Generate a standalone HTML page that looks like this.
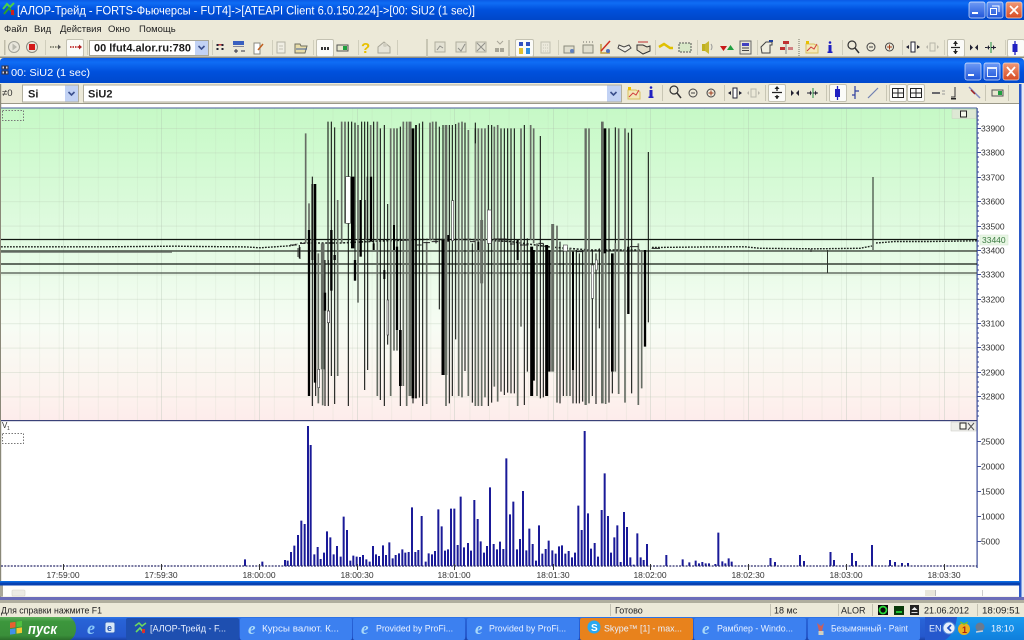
<!DOCTYPE html>
<html><head><meta charset="utf-8"><title>АЛОР-Трейд</title>
<style>html,body{margin:0;padding:0;background:#ece9d8;width:1024px;height:640px;overflow:hidden}svg{display:block;filter:blur(.3px)}text{font-family:"Liberation Sans",sans-serif}</style></head>
<body>
<svg width="1024" height="640" viewBox="0 0 1024 640" xmlns="http://www.w3.org/2000/svg">
<defs>
<linearGradient id="tb" x1="0" y1="0" x2="0" y2="1"><stop offset="0" stop-color="#0a5ae6"/><stop offset=".15" stop-color="#0f6df5"/><stop offset=".5" stop-color="#0050dc"/><stop offset="1" stop-color="#0046c8"/></linearGradient>
<linearGradient id="chartg" x1="0" y1="108" x2="0" y2="420" gradientUnits="userSpaceOnUse"><stop offset="0" stop-color="#c6f9c6"/><stop offset=".45" stop-color="#e4fbe4"/><stop offset=".7" stop-color="#f7fcf4"/><stop offset=".92" stop-color="#fdf2ee"/><stop offset="1" stop-color="#fdeceb"/></linearGradient>
<linearGradient id="task" x1="0" y1="0" x2="0" y2="1"><stop offset="0" stop-color="#2f78ea"/><stop offset=".12" stop-color="#2863d6"/><stop offset=".85" stop-color="#2558cd"/><stop offset="1" stop-color="#1b43a8"/></linearGradient>
<linearGradient id="start" x1="0" y1="0" x2="0" y2="1"><stop offset="0" stop-color="#5cae5c"/><stop offset=".2" stop-color="#3c963c"/><stop offset=".8" stop-color="#3a8f3a"/><stop offset="1" stop-color="#2b6f2b"/></linearGradient>
<linearGradient id="tray" x1="0" y1="0" x2="0" y2="1"><stop offset="0" stop-color="#1a9af0"/><stop offset="1" stop-color="#0f7fdc"/></linearGradient>
<linearGradient id="btn" x1="0" y1="0" x2="0" y2="1"><stop offset="0" stop-color="#6f9bf5"/><stop offset="1" stop-color="#1f55d8"/></linearGradient>
<linearGradient id="red" x1="0" y1="0" x2="0" y2="1"><stop offset="0" stop-color="#f09a78"/><stop offset="1" stop-color="#d84a22"/></linearGradient>
<pattern id="grid" x="0" y="128" width="19.56" height="24.4" patternUnits="userSpaceOnUse"><path d="M0 .5H19.56" stroke="#b8c8b0" stroke-opacity=".3" stroke-width="1" fill="none"/><path d="M.5 0V24.4" stroke="#b8c8b0" stroke-opacity=".16" stroke-width="1" fill="none"/></pattern>
</defs>

<rect width="1024" height="640" fill="#ece9d8"/>

<!-- main title -->
<rect width="1024" height="20" fill="url(#tb)"/>
<g><path d="M3 9 L7 4 L10 7 L14 3" stroke="#4ad04a" stroke-width="2" fill="none"/><path d="M4 14 L9 8 L14 15" stroke="#2ca02c" stroke-width="2" fill="none"/><rect x="11" y="10" width="3" height="5" fill="#d02020"/></g>
<text x="17" y="14.500" font-size="11.500" fill="#fff" textLength="458" lengthAdjust="spacingAndGlyphs">[АЛОР-Трейд - FORTS-Фьючерсы - FUT4]-&gt;[ATEAPI Client 6.0.150.224]-&gt;[00: SiU2 (1 sec)]</text>
<rect x="969" y="2" width="16" height="16" rx="2" fill="url(#btn)" stroke="#dfe9fb" stroke-width=".7"/><rect x="972" y="12" width="6" height="2" fill="#fff"/>
<rect x="987" y="2" width="16" height="16" rx="2" fill="url(#btn)" stroke="#dfe9fb" stroke-width=".7"/><path d="M992 6h7v6M990.500 8.500h6v6h-6z" stroke="#fff" fill="none"/>
<rect x="1006" y="2" width="16" height="16" rx="2" fill="url(#red)" stroke="#f3dcd0" stroke-width=".7"/><path d="M1010 6l8 8M1018 6l-8 8" stroke="#fff" stroke-width="1.700"/>

<!-- menu -->
<g font-size="9.500" fill="#222"><text x="4" y="32">Файл</text><text x="34" y="32">Вид</text><text x="60" y="32">Действия</text><text x="108" y="32">Окно</text><text x="139" y="32">Помощь</text></g>

<!-- main toolbar -->
<rect x="0" y="56.500" width="1024" height="1.500" fill="#8e8d80"/>
<rect x="4" y="40" width="1.500" height="15" fill="#c0bdaa"/>
<g fill="#d0cebc"><rect x="45" y="40" width="1" height="15"/><rect x="87" y="40" width="1" height="15"/><rect x="212" y="40" width="1" height="15"/><rect x="272" y="40" width="1" height="15"/><rect x="313" y="40" width="1" height="15"/><rect x="358" y="40" width="1" height="15"/><rect x="397" y="40" width="1" height="15"/><rect x="558" y="40" width="1" height="15"/><rect x="655" y="40" width="1" height="15"/><rect x="697" y="40" width="1" height="15"/><rect x="757" y="40" width="1" height="15"/><rect x="842" y="40" width="1" height="15"/><rect x="902" y="40" width="1" height="15"/><rect x="944" y="40" width="1" height="15"/><rect x="1005" y="40" width="1" height="15"/></g>
<!-- pressed -->
<g fill="#fbfbf8" stroke="#c4c2b2"><rect x="66.500" y="39.500" width="17" height="17" rx="1.500"/><rect x="316.500" y="39.500" width="17" height="17" rx="1.500"/><rect x="515.500" y="39.500" width="18" height="17" rx="1.500"/><rect x="947.500" y="39.500" width="17" height="17" rx="1.500"/><rect x="1007.500" y="39.500" width="17" height="17" rx="1.500"/></g>
<!-- combo main -->
<rect x="89.500" y="40.500" width="119" height="15" fill="#fff" stroke="#a8a697"/>
<text x="94" y="51.500" font-size="11" font-weight="bold" fill="#1a1a1a" textLength="97" lengthAdjust="spacingAndGlyphs">00 lfut4.alor.ru:780</text>
<rect x="195" y="41" width="13" height="14" fill="#c2d2f4"/><path d="M198.500 46l3 3 3-3" stroke="#3a4f8c" stroke-width="1.600" fill="none"/>
<!-- icons left -->
<circle cx="14" cy="47" r="5.500" fill="#e8e6dc" stroke="#a0a096"/><path d="M12.500 43.500l4.500 3.500-4.500 3.500z" fill="#b8b8ae"/>
<circle cx="32" cy="47" r="5.500" fill="#e8e4da" stroke="#8a8a80"/><rect x="29" y="44" width="6" height="6" fill="#d41818"/>
<path d="M50 47h9" stroke="#8a8a78" stroke-width="2" stroke-dasharray="1.500 1"/><path d="M58 44.500l3 2.500-3 2.500z" fill="#555"/>
<path d="M70 47h9" stroke="#c84848" stroke-width="2" stroke-dasharray="1.500 1"/><path d="M79 44.500l3 2.500-3 2.500z" fill="#b02020"/>
<g fill="#223"><rect x="216.500" y="44" width="2" height="2"/><rect x="216.500" y="48" width="2" height="2"/><rect x="221.500" y="44" width="2" height="2"/><rect x="221.500" y="48" width="2" height="2"/></g><rect x="218.500" y="44" width="3" height="1.500" fill="#d04040"/>
<rect x="233" y="41" width="11" height="4" fill="#3a60c0" /><path d="M234 51h4M236 49v4M241 51h4" stroke="#334" /><rect x="233" y="46" width="11" height="1" fill="#889"/>
<path d="M254 43h6v11h-6z" fill="#fff" stroke="#8a8a80"/><path d="M258 50l5-6" stroke="#c06020" stroke-width="1.500"/>
<rect x="277" y="42" width="8" height="11" fill="#f0eee4" stroke="#b4b2a4"/><path d="M279 46h4M279 49h4" stroke="#c4c2b4"/>
<path d="M295 44h5l1 2h6l-2 7h-10z" fill="#e8dca8" stroke="#707060"/><path d="M296 49h11" stroke="#4060a0"/>
<g fill="#333"><rect x="321" y="47" width="2" height="3"/><rect x="324" y="47" width="2" height="3"/><rect x="327" y="47" width="2" height="3"/></g>
<rect x="337" y="45" width="11" height="6" fill="#e8e8d0" stroke="#555"/><rect x="343" y="46" width="4" height="4" fill="#20a040"/>
<text x="361" y="53" font-size="15" font-weight="bold" fill="#e8c000">?</text>
<path d="M378 47l6-5 6 5v6h-12z" fill="#e6e4d8" stroke="#a8a698"/><circle cx="385" cy="45" r="2" fill="#d0cec0"/>
<rect x="426" y="39" width="2" height="18" fill="#c8c6b4"/>
<g stroke="#b0ae9e" fill="#e4e2d4"><rect x="435" y="42" width="10" height="10"/><rect x="456" y="42" width="10" height="10"/><rect x="476" y="42" width="10" height="10"/></g>
<path d="M437 50l3-4 3 2M458 48l3 3 4-7M477 43l8 8M485 43l-8 8" stroke="#90908a" fill="none"/>
<rect x="495" y="48" width="4" height="4" fill="#a8a698"/><rect x="500" y="48" width="4" height="4" fill="#a8a698"/><path d="M497 41l3 3 3-3" stroke="#a8a698" fill="none"/>
<rect x="508" y="40" width="2" height="17" fill="#c8c6b4"/>
<!-- icons right -->
<g><rect x="519" y="42" width="4" height="4" fill="#3050c0"/><rect x="526" y="42" width="4" height="4" fill="#3050c0"/><rect x="519" y="48" width="4" height="6" fill="#e0c030"/><rect x="526" y="48" width="4" height="6" fill="#3090e0"/></g>
<rect x="541" y="42" width="9" height="11" fill="#ece9dc" stroke="#c0beb0"/><path d="M543 45h5M543 48h5M543 51h5" stroke="#c8c6b8" stroke-dasharray="1 1"/>
<g fill="#e0dece" stroke="#8a8a7c"><path d="M564 46h10v7h-10z"/><path d="M583 45h10v8h-10z"/></g><circle cx="572" cy="51" r="2" fill="#6080c0"/><path d="M583 42h1M586 42h1M589 42h1M592 42h1" stroke="#707068" />
<path d="M601 44v9h9" stroke="#c0a040" stroke-width="1.500" fill="none"/><path d="M601 51l9-10" stroke="#d03020" stroke-width="1.500"/><circle cx="608" cy="51" r="2" fill="#5070c0"/>
<path d="M619 45l5 2 5-2 2 3-6 4-7-4z" fill="#f0eee4" stroke="#444"/>
<path d="M637 45h6l4 2 3-1v5l-7 3-6-4z" fill="#e4dcc8" stroke="#333"/><path d="M638 42h10" stroke="#c03030"/>
<path d="M659 47l5-3 6 4h3" stroke="#e0c000" stroke-width="2.500" fill="none"/>
<rect x="679" y="43" width="12" height="9" fill="#d8e8c8" stroke="#555" stroke-dasharray="2 1"/>
<rect x="702" y="44" width="4" height="7" fill="#c0b020"/><path d="M705 44l4-3v13l-4-3z" fill="#c8b830"/><path d="M711 44q2 3 0 6" stroke="#999" fill="none"/>
<path d="M720 46h7l-3.500 5z" fill="#c81818"/><path d="M727 50h7l-3.500-5z" fill="#20a040"/>
<rect x="740" y="41" width="11" height="13" fill="#e8e6d8" stroke="#666"/><rect x="742" y="43" width="7" height="3" fill="#4040c0"/><path d="M742 48h7M742 50.500h7" stroke="#444"/>
<path d="M761 47l5-5 6 0v3l-2 0v8h-8z" fill="#f0eee0" stroke="#444"/><path d="M769 41h4" stroke="#2040a0" stroke-width="2"/>
<rect x="783" y="41" width="6" height="3" fill="#c03030"/><rect x="780" y="47" width="5" height="3" fill="#c03030"/><rect x="788" y="47" width="5" height="3" fill="#d08080"/><path d="M786 44v10" stroke="#888"/>
<path d="M799 39v18" stroke="#b0ae9e" stroke-width="2" stroke-dasharray="1 1"/>
<path d="M806 44v9h12v-7l-4-2z" fill="#f4e8b8" stroke="#d8c060"/><path d="M807 51l4-4 3 2 3-5" stroke="#d04040" fill="none"/><rect x="806" y="41" width="3" height="3" fill="#e8c000"/>
<circle cx="830" cy="42.500" r="1.300" fill="#2020c0"/><rect x="828.500" y="45" width="3" height="7" fill="#2020c0"/><rect x="827.500" y="51.500" width="5" height="1.500" fill="#2020c0"/>
<circle cx="852" cy="45" r="4" fill="none" stroke="#333" stroke-width="1.200"/><path d="M855 48l4 5" stroke="#333" stroke-width="1.500"/>
<circle cx="871" cy="47" r="4" fill="none" stroke="#444"/><path d="M869 47h4" stroke="#444"/>
<circle cx="889.500" cy="47" r="4" fill="none" stroke="#444"/><path d="M887 47h5M889.500 44.500v5" stroke="#a04020"/>
<rect x="911" y="42" width="4" height="10" fill="#fff" stroke="#223"/><path d="M909 45l-3 2 3 2zM917 45l3 2-3 2z" fill="#223"/>
<rect x="930" y="43" width="5" height="8" fill="none" stroke="#b8b6aa"/><path d="M928 45l-2 2 2 2zM937 45l2 2-2 2z" fill="#b8b6aa"/>
<path d="M955.500 41v5M955.500 49v5M951 47.500h9" stroke="#222" stroke-width="1.300"/><path d="M953 44l2.500-3 2.500 3zM953 51l2.500 3 2.500-3z" fill="#222"/>
<path d="M970 44.500v6l3-3zM978 44.500v6l-3-3z" fill="#223"/>
<path d="M991 42v11" stroke="#209040"/><path d="M985 47.500h12" stroke="#223" stroke-dasharray="2 1"/><path d="M989 45v5l-2-2.500zM993 45v5l2-2.500z" fill="#223"/>
<rect x="1012.500" y="44" width="5" height="8" fill="#2020c0"/><path d="M1015 41v14" stroke="#2020c0" stroke-width="1.300"/>

<!-- inner window -->
<path d="M0 62q0-4 4-4h1016q4 0 4 4v24H0z" fill="url(#tb)"/>
<rect x="0" y="83" width="1024" height="21" fill="#ece9d8"/>
<rect x="0" y="103" width="1020" height="1" fill="#9a9888"/>
<rect x="1" y="104" width="1019" height="478" fill="#fff"/>
<g fill="#d8d8e8" stroke="#334"><rect x="2" y="66" width="2.500" height="3"/><rect x="5.500" y="66" width="2.500" height="3"/><rect x="2" y="71" width="2.500" height="3"/><rect x="5.500" y="71" width="2.500" height="3"/></g>
<text x="11" y="76" font-size="10.500" fill="#fff" textLength="79" lengthAdjust="spacingAndGlyphs">00: SiU2 (1 sec)</text>
<rect x="965" y="63" width="16" height="17" rx="2" fill="url(#btn)" stroke="#dfe9fb" stroke-width=".7"/><rect x="968" y="74" width="6" height="2" fill="#fff"/>
<rect x="984" y="63" width="16" height="17" rx="2" fill="url(#btn)" stroke="#dfe9fb" stroke-width=".7"/><path d="M987.500 67.500h9v9h-9zM987.500 68.500h9" stroke="#e8f0ff" fill="none"/>
<rect x="1003" y="63" width="16" height="17" rx="2" fill="url(#red)" stroke="#f3dcd0" stroke-width=".7"/><path d="M1007 67l8 9M1015 67l-8 9" stroke="#fff" stroke-width="1.800"/>

<!-- inner toolbar -->
<text x="2" y="96" font-size="9.500" fill="#333">≠0</text>
<rect x="22.500" y="85" width="56" height="17" fill="#fff" stroke="#b0ae9e"/>
<text x="28" y="97.500" font-size="11" font-weight="bold" fill="#222">Si</text>
<rect x="65" y="85.500" width="13" height="16" fill="#c2d2f4"/><path d="M68.500 92l3 3 3-3" stroke="#3a4f8c" stroke-width="1.600" fill="none"/>
<rect x="83.500" y="85" width="538" height="17" fill="#fff" stroke="#b0ae9e"/>
<text x="88" y="97.500" font-size="11" font-weight="bold" fill="#222">SiU2</text>
<rect x="607" y="85.500" width="14" height="16" fill="#c2d2f4"/><path d="M610.500 92l3 3 3-3" stroke="#3a4f8c" stroke-width="1.600" fill="none"/>
<g fill="#fbfbf8" stroke="#c4c2b2"><rect x="768.500" y="84.500" width="17" height="17" rx="1.500"/><rect x="829.500" y="84.500" width="17" height="17" rx="1.500"/><rect x="889.500" y="84.500" width="17" height="17" rx="1.500"/><rect x="907.500" y="84.500" width="17" height="17" rx="1.500"/></g>
<rect x="662" y="85" width="1" height="16" fill="#c8c6b4"/><rect x="724" y="85" width="1" height="16" fill="#c8c6b4"/><rect x="765" y="85" width="1" height="16" fill="#c8c6b4"/><rect x="826" y="85" width="1" height="16" fill="#c8c6b4"/><rect x="886" y="85" width="1" height="16" fill="#c8c6b4"/><rect x="985" y="85" width="1" height="16" fill="#c8c6b4"/><rect x="1008" y="85" width="1" height="16" fill="#c8c6b4"/>
<path d="M628 90v9h12v-7l-4-2z" fill="#f4e8b8" stroke="#d8c060"/><path d="M629 97l4-4 3 2 3-5" stroke="#d04040" fill="none"/><rect x="628" y="87" width="3" height="3" fill="#e8c000"/>
<circle cx="651" cy="87.500" r="1.300" fill="#2020c0"/><rect x="649.500" y="90" width="3" height="7" fill="#2020c0"/><rect x="648.500" y="96.500" width="5" height="1.500" fill="#2020c0"/>
<circle cx="674" cy="90" r="4" fill="none" stroke="#333" stroke-width="1.200"/><path d="M677 93l4 5" stroke="#333" stroke-width="1.500"/>
<circle cx="693" cy="93" r="4" fill="none" stroke="#444"/><path d="M691 93h4" stroke="#444"/>
<circle cx="711" cy="93" r="4" fill="none" stroke="#444"/><path d="M708.500 93h5M711 90.500v5" stroke="#a04020"/>
<rect x="733" y="88" width="4" height="10" fill="#fff" stroke="#223"/><path d="M731 91l-3 2 3 2zM739 91l3 2-3 2z" fill="#223"/>
<rect x="751" y="89" width="5" height="8" fill="none" stroke="#b8b6aa"/><path d="M749 91l-2 2 2 2zM758 91l2 2-2 2z" fill="#b8b6aa"/>
<path d="M777 87v4M777 95v4M772 92.500h10" stroke="#222" stroke-width="1.300"/><path d="M774.500 89l2.500-3 2.500 3zM774.500 96l2.500 3 2.500-3z" fill="#222"/>
<path d="M791 90v6l3-3zM799 90v6l-3-3z" fill="#223"/>
<path d="M813 88v10" stroke="#209040"/><path d="M807 93h12" stroke="#223" stroke-dasharray="2 1"/><path d="M811 90.500v5l-2-2.500zM815 90.500v5l2-2.500z" fill="#223"/>
<rect x="835" y="89" width="5" height="8" fill="#2020c0"/><path d="M837.500 86v14" stroke="#2020c0" stroke-width="1.300"/>
<path d="M855 86v13M855 91h4M855 95h-3" stroke="#3040a0" stroke-width="1.200" fill="none"/>
<path d="M868 98l10-10" stroke="#7080b0" stroke-width="1.200"/>
<path d="M892.500 88.500h11v9h-11zM892.500 93h11M898 88.500v9" stroke="#222" fill="none"/><path d="M910.500 88.500h11v9h-11zM910.500 93h11M916 88.500v9" stroke="#222" fill="none"/>
<path d="M932 93h8" stroke="#223" stroke-width="1.300"/><path d="M942 91h3M942 94h3" stroke="#999"/>
<path d="M955 87v10h-4" stroke="#333" fill="none"/><rect x="951" y="98" width="5" height="1.500" fill="#222"/>
<path d="M969 87l11 11" stroke="#8088c0" stroke-width="1.500"/><path d="M971 90l4 4" stroke="#a02020" stroke-width="1.500"/>
<rect x="992" y="90" width="11" height="6" fill="#e8e8d0" stroke="#555"/><rect x="998" y="91" width="4" height="4" fill="#20a040"/>

<!-- inner edges -->
<rect x="0" y="84" width="1.200" height="514" fill="#8a8878"/>
<rect x="1019" y="84" width="2.500" height="514" fill="#2a58c8"/>
<rect x="1021.500" y="84" width="2.500" height="519" fill="#e4eaf8"/>

<!-- price chart -->
<rect x="1" y="108" width="976" height="312" fill="url(#chartg)"/>
<rect x="1" y="108" width="976" height="312" fill="url(#grid)"/>
<g stroke="#aab8a8" stroke-opacity=".3"><path d="M63.500 109V420M161.500 109V420M259.500 109V420M357.500 109V420M454.500 109V420M553.500 109V420M650.500 109V420M748.500 109V420M846.500 109V420M944.500 109V420"/></g>
<rect x="1" y="107.500" width="976" height="1" fill="#4a5a98"/>
<rect x="976.500" y="108" width="1.200" height="460" fill="#3a4a98"/>
<rect x="1" y="420" width="976" height="1.200" fill="#3a4178"/>
<rect x="2.500" y="110.500" width="21" height="10" fill="none" stroke="#777" stroke-dasharray="1.500 1.500"/>
<rect x="952" y="109.500" width="24" height="9" fill="#dde8d4" stroke="#c8d0c0" stroke-width=".5"/><rect x="960.500" y="111" width="6" height="6" fill="#f4f8ec" stroke="#222"/>

<!-- level lines -->
<g fill="none">
<path d="M1 239.500H977" stroke="#111811" stroke-width="1.200"/>
<path d="M1 251H977" stroke="#2c342c" stroke-width="1.300"/>
<path d="M1 252.300H172" stroke="#6a706a" stroke-width="1"/>
<path d="M1 264H977" stroke="#111811" stroke-width="1.200"/>
<path d="M1 273H977" stroke="#4a524a" stroke-width="1.300"/>
</g>

<!-- tick dashes -->
<g fill="none" stroke="#1f241f">
<path d="M1 246.800H105L140 246.500 175 246.200 200 246.500 246 246.900 260 247.800 290 245.800 298 244" stroke-width="1.400" stroke-dasharray="1.800 1.200"/>
<path d="M652 247.500L700 247 745 246.800 760 248.300 780 248.500 815 248.800 860 248.300 872 246" stroke-width="1.400" stroke-dasharray="1.800 1.200"/>
<path d="M876 243L895 241.500H930L978 240.800" stroke-width="1.400" stroke-dasharray="1.800 1.200"/>
<path d="M300 243L340 243 380 241 420 239.500 470 239.500 510 241.500 550 247 590 250 610 250 640 250" stroke-width="1.600" stroke-dasharray="2 1.600"/>
</g>
<path d="M873 177V250" stroke="#2e362e" stroke-width="1.100"/>
<path d="M827.500 250V273" stroke="#2e362e" stroke-width="1"/>
<path d="M298 248v9M300 247v12" stroke="#333"/>
<path d="M811 249v3" stroke="#333"/>

<!-- candles group 1 -->
<g transform="translate(290,110) scale(.33333)" fill="none" stroke-linecap="butt">
<g stroke="#666d64" stroke-width="5">
<path d="M47 70V400M57 280V360M85 430V880M143 270V798M155 35V400M165 35V340M204 45V578M232 200V390M242 45V200M262 35V858M302 55V858M312 55V722M321 410V722M340 35V828M350 35V888M410 395V882M420 38V390M428 35V390M506 38V858M516 35V862M535 60V858"/>
<path d="M360 35V858" stroke-width="9"/><path d="M98 400V778" stroke-width="11"/><path d="M98 778V886" stroke-width="5"/><path d="M67 222V450" stroke-width="7"/><path d="M468 45V795" stroke-width="8"/><path d="M468 795V888" stroke-width="5"/><path d="M225 270V390" stroke-width="6"/>
</g>
<g stroke="#101310" stroke-width="3.200">
<path d="M28 405V445M67 200V888M77 222V858M105 450V888M115 450V888M114 35V460M124 35V798M134 52V882M175 35V888M185 35V200M195 38V512M215 35V270M224 35V840M233 35V780M251 35V420M271 55V870M283 45V888M293 282V704M321 55V410M331 50V888M388 40V863M398 35V888M438 35V400M448 50V598M459 45V390M478 45V880M487 45V858M497 42V688M525 38V783M369 865V880"/>
</g>
<g stroke="#000">
<path d="M57 360V858" stroke-width="7"/><path d="M75 222V818" stroke-width="7"/><path d="M105 548V602" stroke-width="7"/><path d="M124 360V542" stroke-width="7"/><path d="M134 435V450" stroke-width="7"/><path d="M188 200V415" stroke-width="10"/><path d="M195 450V512" stroke-width="7"/><path d="M212 270V440" stroke-width="7"/><path d="M243 200V395" stroke-width="7"/><path d="M251 400V420" stroke-width="6"/><path d="M283 480V507" stroke-width="6"/><path d="M312 345V420" stroke-width="6"/><path d="M321 410V660" stroke-width="7"/><path d="M331 660V828" stroke-width="8"/><path d="M369 55V865" stroke-width="8"/><path d="M378 45V865" stroke-width="5"/><path d="M459 390V795" stroke-width="9"/><path d="M475 375V395" stroke-width="6"/>
</g>
<g fill="#fff" stroke="#444" stroke-width="2"><rect x="167" y="200" width="14" height="140"/><rect x="112" y="603" width="7" height="35"/><rect x="83" y="778" width="6" height="55"/><rect x="291" y="570" width="5" height="105"/><rect x="485" y="272" width="6" height="120"/></g>
<g stroke="#222" stroke-width="3"><path d="M0 405H20M30 400H45M340 390H355M375 405H395M400 398H420M425 395H445"/></g>
</g>

<!-- candles group 2 -->
<g transform="translate(470,110) scale(.33333)" fill="none">
<g stroke="#666d64" stroke-width="5">
<path d="M16 55V888M25 55V888M45 55V862M73 50V830M83 45V875M143 390V888M182 45V390M191 55V400M201 400V858M261 347V878M290 415V858M300 415V858M357 55V880M407 430V882M436 400V785M446 55V852M465 55V878M505 400V885M515 420V835"/>
<path d="M35 55V888" stroke-width="5"/><path d="M35 330V520" stroke-width="9"/><path d="M248 342V785" stroke-width="9"/><path d="M347 55V885" stroke-width="7"/><path d="M397 35V880" stroke-width="8"/><path d="M153 55V650" stroke-width="5"/>
</g>
<g stroke="#101310" stroke-width="3.200">
<path d="M7 400V878M16 38V100M55 45V888M65 45V878M93 55V845M103 55V855M113 55V848M123 55V850M133 55V850M163 45V885M172 385V785M211 78V865M220 400V862M270 395V880M280 415V858M309 780V880M319 420V880M328 430V880M338 420V875M367 420V858M378 430V882M388 415V655M417 55V878M427 785V850M436 52V400M475 68V410M485 55V850M535 126V637"/>
</g>
<g stroke="#000">
<path d="M25 395V420" stroke-width="6"/><path d="M143 390V450M143 430V448" stroke-width="6"/><path d="M185 410V858" stroke-width="9"/><path d="M191 420V812" stroke-width="7"/><path d="M230 405V858" stroke-width="9"/><path d="M238 420V785" stroke-width="7"/><path d="M309 425V780" stroke-width="6"/><path d="M405 55V430" stroke-width="8"/><path d="M427 430V785" stroke-width="8"/><path d="M475 410V612" stroke-width="7"/><path d="M525 420V710" stroke-width="7"/>
</g>
<g fill="#fff" stroke="#555" stroke-width="2"><rect x="52" y="300" width="12" height="100"/><rect x="364" y="465" width="7" height="100"/><rect x="376" y="450" width="6" height="30"/><rect x="280" y="405" width="12" height="18"/></g>
<g stroke="#222" stroke-width="3"><path d="M0 395H15M70 387H110M120 402H135M150 405H175M205 400H220M320 425H340M480 410H505M545 415H570"/></g>
</g>

<!-- price axis -->
<g stroke="#3a4a98"><path d="M977 128.500h4M977 152.500h4M977 177.500h4M977 201.500h4M977 226.500h4M977 250.500h4M977 274.500h4M977 299.500h4M977 323.500h4M977 347.500h4M977 372.500h4M977 396.500h4"/><path d="M977 112h2M977 116h2M977 120h2M977 124h2M977 133h2M977 138h2M977 143h2M977 148h2M977 157h2M977 162h2M977 167h2M977 172h2M977 182h2M977 187h2M977 192h2M977 197h2M977 206h2M977 211h2M977 216h2M977 221h2M977 231h2M977 236h2M977 241h2M977 246h2M977 255h2M977 260h2M977 265h2M977 270h2M977 279h2M977 284h2M977 289h2M977 294h2M977 304h2M977 309h2M977 314h2M977 319h2M977 328h2M977 333h2M977 338h2M977 343h2M977 352h2M977 357h2M977 362h2M977 367h2M977 377h2M977 382h2M977 387h2M977 392h2M977 401h2M977 406h2M977 411h2M977 416h2"/></g>
<g font-size="8.500" fill="#333"><text x="981" y="131.500">33900</text><text x="981" y="155.500">33800</text><text x="981" y="180.500">33700</text><text x="981" y="204.500">33600</text><text x="981" y="229.500">33500</text><text x="981" y="253.500">33400</text><text x="981" y="277.500">33300</text><text x="981" y="302.500">33200</text><text x="981" y="326.500">33100</text><text x="981" y="350.500">33000</text><text x="981" y="375.500">32900</text><text x="981" y="399.500">32800</text></g>
<rect x="980" y="235" width="28" height="10" fill="#e8f6e4" stroke="#d4e4d0" stroke-width=".5"/>
<text x="982" y="243" font-size="8.500" fill="#3c7a42">33440</text>

<!-- volume panel -->
<text x="2" y="428" font-size="8" fill="#333">V</text><text x="7" y="430" font-size="5" fill="#333">1</text>
<rect x="2.500" y="433.500" width="21" height="10" fill="none" stroke="#777" stroke-dasharray="1.500 1.500"/>
<rect x="951" y="422" width="25" height="9" fill="#eeeeea" stroke="#c8c8c0" stroke-width=".5"/><rect x="960" y="423" width="6" height="6" fill="#f8f8f0" stroke="#222"/><path d="M968 423l6 7M974 423l-6 7" stroke="#555"/>

<g transform="translate(230,420) scale(.33333)" stroke="#1a1a98" stroke-width="6" fill="none">
<path d="M45 418V438M97 425V438M165 420V438M173 422V438M183 396V438M193 377V438M204 345V438M214 302V438M224 312V438M234 18V438M242 75V438M253 403V438M263 381V438M272 417V438M282 398V438M291 334V438M301 352V438M311 403V438M321 378V438M332 410V438M341 290V438M351 330V438M361 422V438M370 407V438M380 410V438M390 411V438M399 405V438M409 418V438M419 425V438M429 378V438M438 403V438M447 408V438M459 376V438M468 405V438M478 367V438M488 415V438M497 405V438M507 400V438M517 388V438M526 398V438M536 396V438M546 262V438M556 396V438M565 390V438M575 288V438M587 425V438M596 400V438M606 403V438M615 393V438M625 268V438M635 319V438M645 392V438M654 388V438M663 266V438M673 266V438M683 375V438M692 230V438M702 382V438M714 369V438M723 392V438M733 240V438M743 297V438M752 364V438M762 398V438M771 378V438"/>
</g>
<g transform="translate(490,420) scale(.33333)" stroke="#1a1a98" stroke-width="6" fill="none">
<path d="M0 202V438M11 372V438M21 388V438M30 365V438M40 387V438M49 115V438M60 283V438M70 245V438M81 388V438M90 357V438M99 213V438M109 391V438M118 326V438M128 372V438M138 422V438M147 316V438M157 401V438M167 387V438M176 362V438M187 391V438M197 401V438M207 379V438M216 376V438M226 401V438M236 393V438M246 412V438M255 398V438M265 257V438M275 330V438M284 33V438M294 280V438M303 386V438M314 369V438M324 410V438M335 270V438M344 160V438M354 288V438M363 398V438M373 352V438M382 316V438M392 426V438M402 276V438M411 321V438M421 412V438M431 434V438M442 340V438M452 412V438M461 420V438M471 372V438M529 405V438M578 418V438M598 427V438M617 422V438M627 430V438M637 426V438M647 430V438M657 430V438M676 432V438M685 338V438M697 424V438M706 430V438M716 415V438M725 425V438"/>
</g>
<path d="M770.500 566V558M775 566V562M800 566V555M804 566V561M830.500 566V552M834 566V560M852 566V553M856 566V561M872 566V545M890 566V560M895 566V562M902 566V563M908 566V563" stroke="#1a1a98" stroke-width="2" fill="none"/>
<path d="M1 566H977" stroke="#2a2a6a" stroke-width="1.200" stroke-dasharray="2 1.260"/>
<!-- volume axis -->
<g stroke="#3a4a98"><path d="M977 441.500h4M977 466.500h4M977 491.500h4M977 516.500h4M977 541.500h4"/></g>
<g font-size="8.500" fill="#333"><text x="981" y="444.500">25000</text><text x="981" y="469.500">20000</text><text x="981" y="494.500">15000</text><text x="981" y="519.500">10000</text><text x="981" y="544.500">5000</text></g>
<!-- time axis -->
<g stroke="#333"><path d="M63.500 564V570M161.500 564V570M259.500 564V570M357.500 564V570M454.500 564V570M553.500 564V570M650.500 564V570M748.500 564V570M846.500 564V570M944.500 564V570"/></g>
<g font-size="8.500" fill="#333" text-anchor="middle"><text x="63" y="578">17:59:00</text><text x="161" y="578">17:59:30</text><text x="259" y="578">18:00:00</text><text x="357" y="578">18:00:30</text><text x="454" y="578">18:01:00</text><text x="553" y="578">18:01:30</text><text x="650" y="578">18:02:00</text><text x="748" y="578">18:02:30</text><text x="846" y="578">18:03:00</text><text x="944" y="578">18:03:30</text></g>

<!-- bottom of inner -->
<rect x="0" y="581" width="1020" height="1.500" fill="#0a6ae0"/>
<rect x="0" y="582.500" width="1020" height="3" fill="#0640b0"/>
<rect x="1" y="585.500" width="1018" height="11" fill="#fdfdfb"/>
<rect x="0" y="585.500" width="3" height="11" fill="#a8a698"/>
<rect x="12" y="590" width="13" height="6" rx="1" fill="#ecebe4" stroke="#d4d2c8" stroke-width=".6"/>
<rect x="925" y="590" width="10" height="6" fill="#e8e6da"/><rect x="935" y="590" width="1" height="6" fill="#bbb"/><rect x="982" y="590" width="1" height="6" fill="#ccc"/>
<rect x="0" y="597" width="1024" height="3" fill="#6a6cb8"/>
<rect x="0" y="600" width="1024" height="3" fill="#b0ae9e"/>

<!-- status bar -->
<rect x="0" y="603" width="1024" height="14" fill="#ece9d8"/>
<g fill="#c4c2b2"><rect x="610" y="604" width="1" height="12"/><rect x="770" y="604" width="1" height="12"/><rect x="838" y="604" width="1" height="12"/><rect x="872" y="604" width="1" height="12"/><rect x="977" y="604" width="1" height="12"/></g>
<g font-size="9" fill="#222"><text x="1" y="613.500" textLength="101" lengthAdjust="spacingAndGlyphs">Для справки нажмите F1</text><text x="615" y="613.500">Готово</text><text x="774" y="613.500">18 мс</text><text x="841" y="613.500">ALOR</text><text x="924" y="613.500" textLength="45" lengthAdjust="spacingAndGlyphs">21.06.2012</text><text x="982" y="613.500" textLength="38" lengthAdjust="spacingAndGlyphs">18:09:51</text></g>
<rect x="878" y="605" width="10" height="10" fill="#0a0a0a"/><circle cx="883" cy="610" r="3.500" fill="none" stroke="#28d838" stroke-width="1.800"/>
<rect x="894" y="606" width="10" height="9" fill="#0a3a0a"/><rect x="896" y="611" width="6" height="2" fill="#20c030"/>
<rect x="910" y="605" width="9" height="10" fill="#222"/><path d="M911.500 610l3-3 3 3z" fill="#eee"/><rect x="911.500" y="612" width="6" height="1" fill="#ddd"/>

<!-- taskbar -->
<rect x="0" y="617" width="1024" height="23" fill="url(#task)"/>
<path d="M0 617h70q6 4 6 11.500 0 8-6 11.500H0z" fill="url(#start)"/>
<g><rect x="10" y="622" width="5.500" height="5.500" fill="#e86030" transform="skewY(-8) translate(0,2)"/><rect x="16.500" y="621" width="5.500" height="5.500" fill="#50c040" transform="skewY(-8) translate(0,3)"/><rect x="10" y="628.500" width="5.500" height="5.500" fill="#4090e8" transform="skewY(-8) translate(0,2)"/><rect x="16.500" y="627.500" width="5.500" height="5.500" fill="#f0c830" transform="skewY(-8) translate(0,3)"/></g>
<text x="28" y="634" font-size="15" font-weight="bold" font-style="italic" fill="#fff" textLength="29" lengthAdjust="spacingAndGlyphs">пуск</text>
<text x="87" y="634" font-size="18" font-weight="bold" font-style="italic" fill="#8ac8f8" style="font-family:'Liberation Serif',serif">e</text>
<rect x="105" y="622" width="10" height="11" rx="2" fill="#d8e8f8" stroke="#3060c0"/><text x="107" y="631" font-size="9" font-weight="bold" fill="#2050b0">e</text>
<rect x="126" y="618" width="113" height="22" rx="2" fill="#1e4fb0"/>
<rect x="240" y="618" width="112" height="22" rx="2" fill="#3c80f0"/>
<rect x="353" y="618" width="112" height="22" rx="2" fill="#3c80f0"/>
<rect x="467" y="618" width="112" height="22" rx="2" fill="#3c80f0"/>
<rect x="580" y="618" width="113" height="22" rx="2" fill="#e8821c"/>
<rect x="694" y="618" width="112" height="22" rx="2" fill="#3c80f0"/>
<rect x="808" y="618" width="112" height="22" rx="2" fill="#3c80f0"/>
<path d="M135 626l4-3 3 3 4-3M136 632l4-4 4 5" stroke="#6cd860" stroke-width="1.600" fill="none"/><rect x="142" y="629" width="3" height="4" fill="#d83030"/>
<g font-size="17" font-weight="bold" font-style="italic" fill="#a8d8f8" style="font-family:'Liberation Serif',serif"><text x="248" y="634" style="font-family:'Liberation Serif',serif">e</text><text x="361" y="634" style="font-family:'Liberation Serif',serif">e</text><text x="475" y="634" style="font-family:'Liberation Serif',serif">e</text><text x="702" y="634" style="font-family:'Liberation Serif',serif">e</text></g>
<circle cx="594" cy="627" r="6.500" fill="#28a8f0"/><text x="591" y="631" font-size="10" font-weight="bold" fill="#fff">S</text>
<path d="M817 623l2 8h3l2-8-3 3z" fill="#c86060"/><rect x="818.500" y="631" width="5" height="4" fill="#d0d0c0"/>
<g font-size="9" fill="#e8f0ff"><text x="150" y="631.500" textLength="76" lengthAdjust="spacingAndGlyphs">[АЛОР-Трейд - F...</text><text x="262" y="631.500" textLength="77" lengthAdjust="spacingAndGlyphs">Курсы валют. К...</text><text x="376" y="631.500" textLength="77" lengthAdjust="spacingAndGlyphs">Provided by ProFi...</text><text x="489" y="631.500" textLength="77" lengthAdjust="spacingAndGlyphs">Provided by ProFi...</text><text x="604" y="631.500" textLength="78" lengthAdjust="spacingAndGlyphs">Skype™ [1] - max...</text><text x="717" y="631.500" textLength="76" lengthAdjust="spacingAndGlyphs">Рамблер - Windo...</text><text x="831" y="631.500" textLength="77" lengthAdjust="spacingAndGlyphs">Безымянный - Paint</text></g>
<path d="M925 617h99v23h-99z" fill="#2558cd"/>
<path d="M945 640q10-6 12-23h67v23z" fill="url(#tray)"/>
<text x="929" y="631.500" font-size="9" fill="#e8f0ff">EN</text>
<circle cx="949" cy="628" r="6" fill="#e8f0fc" stroke="#5088d8"/><path d="M951 625l-3 3 3 3" stroke="#2050c0" stroke-width="1.800" fill="none"/>
<circle cx="964" cy="629" r="6" fill="#e8b020"/><text x="962" y="633" font-size="9" font-weight="bold" fill="#b02010">1</text><path d="M960 622l4 2 4-2" stroke="#60c040" stroke-width="1.500" fill="none"/>
<circle cx="980" cy="627" r="4.500" fill="#6a7a90"/><path d="M976 632l7-1" stroke="#c8d0d8" stroke-width="1.500"/>
<text x="991" y="631.500" font-size="9" fill="#f0f6ff" textLength="23" lengthAdjust="spacingAndGlyphs">18:10</text>
</svg>
</body></html>
